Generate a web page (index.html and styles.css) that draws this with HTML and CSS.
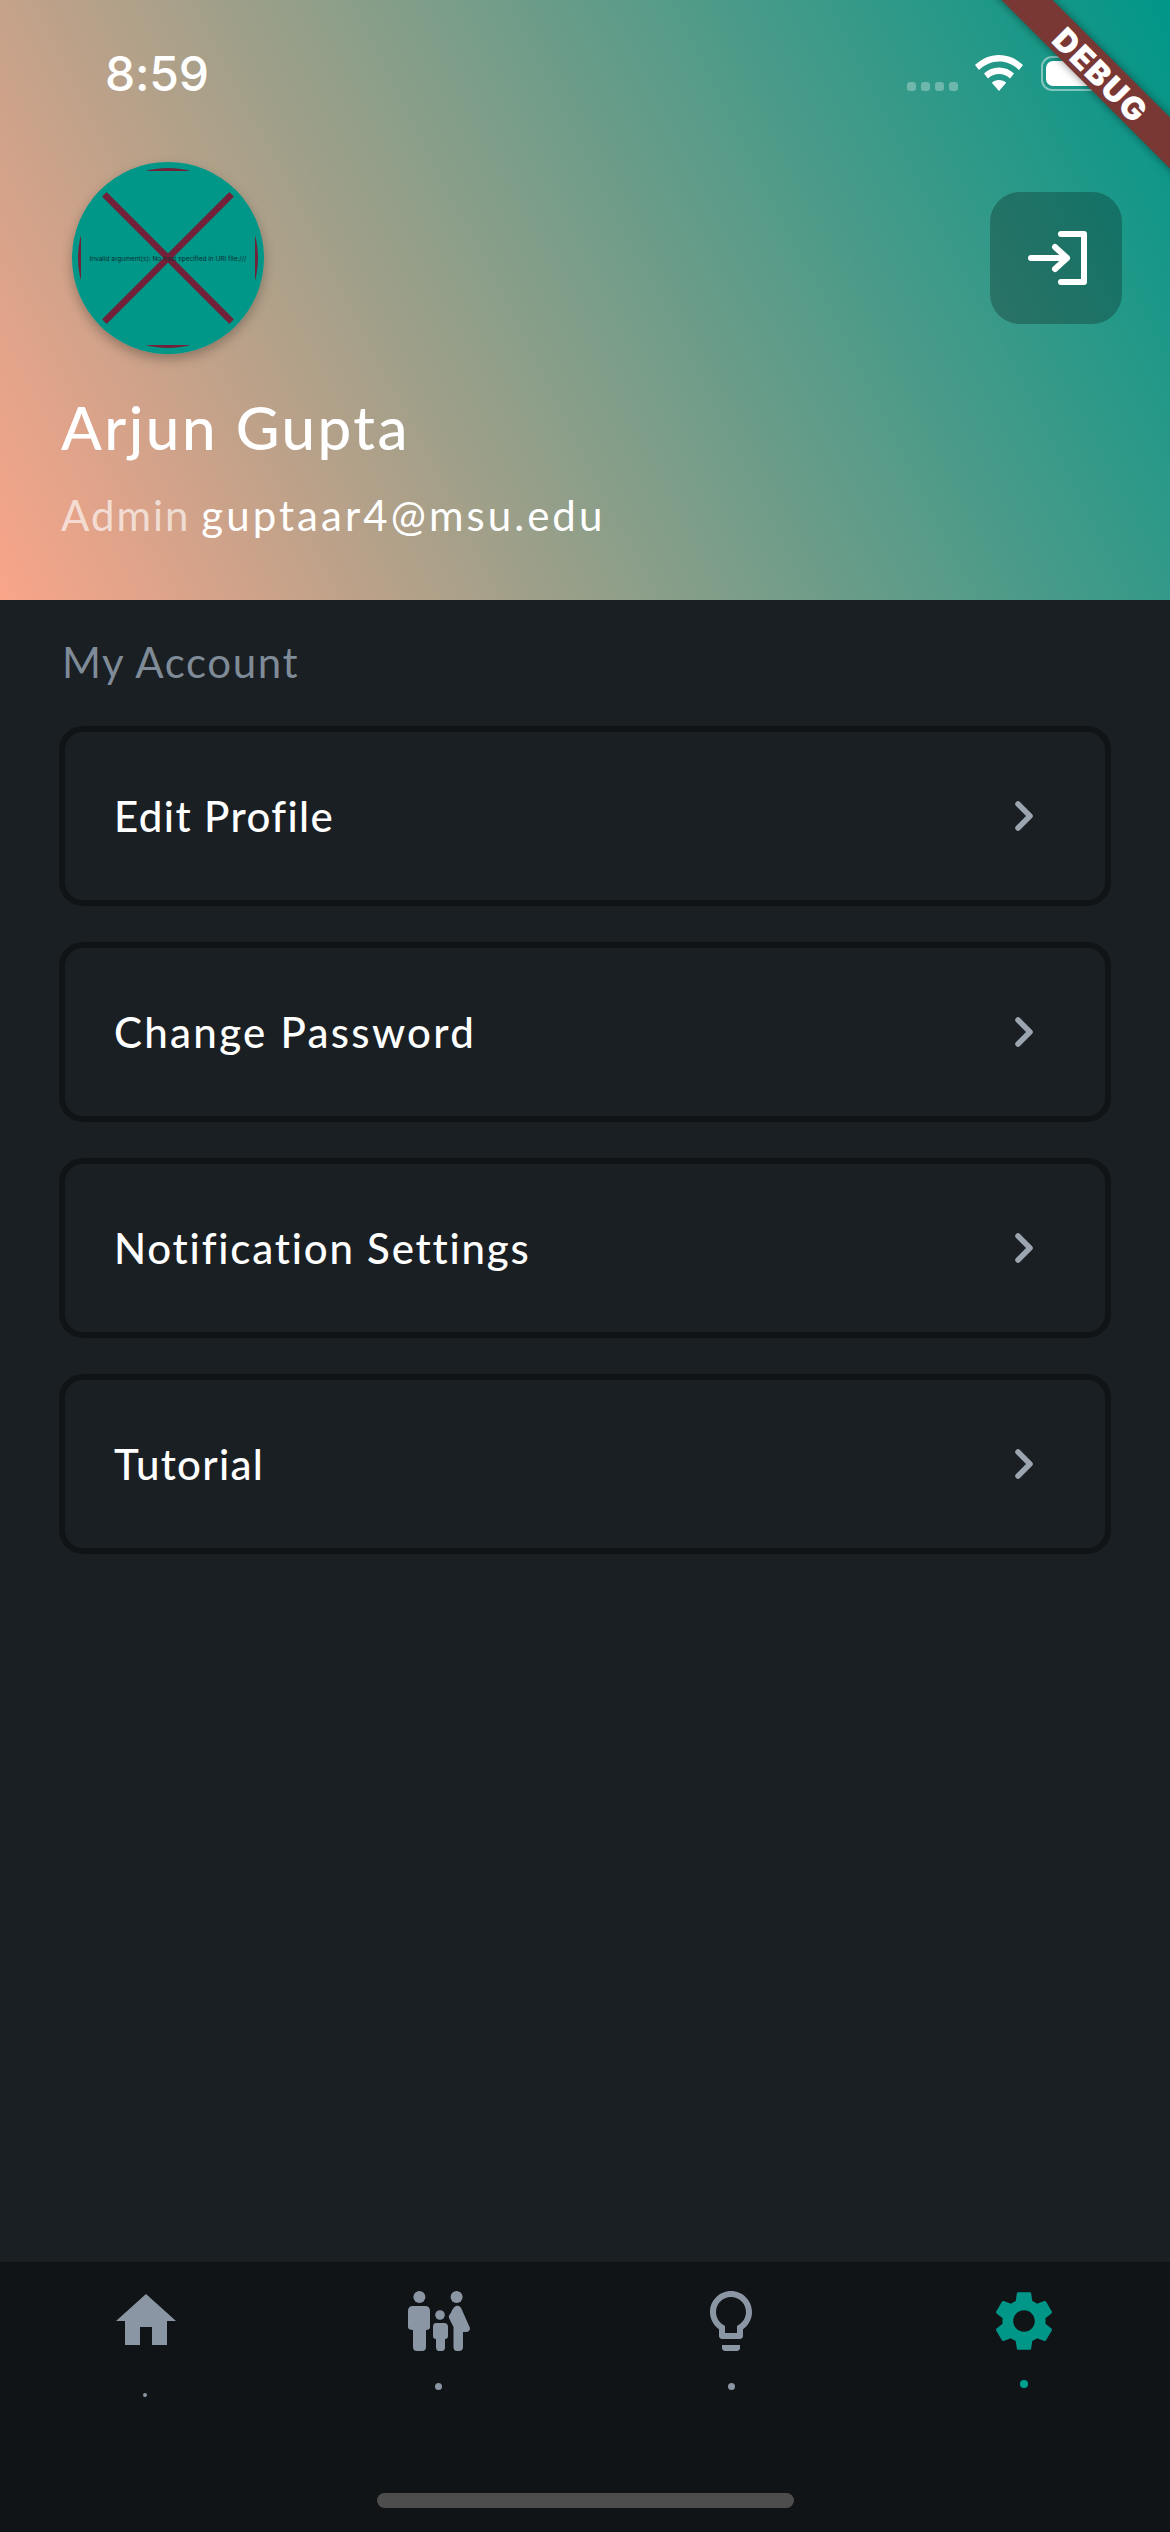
FILE: index.html
```html
<!DOCTYPE html>
<html lang="en">
<head>
<meta charset="utf-8">
<title>Account</title>
<link rel="stylesheet" href="styles.css">
</head>
<body>
<div class="screen">
  <header class="hero">
    <div class="status">
      <span class="time">8:59</span>
      <div class="status-right">
        <div class="signal"><i></i><i></i><i></i><i></i></div>
        <svg class="wifi" width="48" height="36" viewBox="0 0 48 36"><path d="M24 0C15 0 7 3.400 0 10l4 5C10 9.500 16.500 6.500 24 6.500S38 9.500 44 15l4-5C41 3.400 33 0 24 0z" fill="#fff"/><path d="M24 12.500c-5.800 0-11 2.200-15 6l4 5c2.900-2.800 6.700-4.500 11-4.500s8.100 1.700 11 4.500l4-5c-4-3.800-9.200-6-15-6z" fill="#fff"/><path d="M24 25c-2.800 0-5.300 1-7.200 2.800L24 36l7.200-8.200C29.300 26 26.800 25 24 25z" fill="#fff"/></svg>
        <div class="battery"><div class="battery-fill"></div></div>
      </div>
    </div>
    <div class="hero-row">
      <div class="avatar">
        <svg width="192" height="192" viewBox="0 0 192 192">
          <defs><clipPath id="avatarClip"><circle cx="96" cy="96" r="90"/></clipPath></defs>
          <circle cx="96" cy="96" r="96" fill="#009688"/>
          <g clip-path="url(#avatarClip)" stroke="#722138" fill="none">
            <rect x="7.500" y="7.500" width="177" height="177" stroke-width="3"/>
            <path d="M6 6L186 186M186 6L6 186" stroke-width="6.500"/>
          </g>
          <text class="avatar-error" x="96" y="98.500" text-anchor="middle">Invalid argument(s): No host specified in URI file:///</text>
        </svg>
      </div>
      <button class="logout" type="button" aria-label="Log out">
        <svg width="60" height="54" viewBox="0 0 60 54" fill="none" stroke="#fff" stroke-width="6" stroke-linecap="round" stroke-linejoin="round"><path d="M3 27H39M27 16L39 27L27 38"/><path d="M33 3H56V51H33"/></svg>
      </button>
    </div>
    <h1 class="name">Arjun Gupta</h1>
    <p class="meta"><span class="role">Admin</span> <span class="email">guptaar4@msu.edu</span></p>
  </header>

  <main class="content">
    <h2 class="section-title">My Account</h2>
    <div class="menu">
      <a class="card"><span class="card-label label-edit">Edit Profile</span><svg class="chev" width="18" height="30" viewBox="0 0 18 30"><path d="M3 3L15 15L3 27"/></svg></a>
      <a class="card"><span class="card-label label-password">Change Password</span><svg class="chev" width="18" height="30" viewBox="0 0 18 30"><path d="M3 3L15 15L3 27"/></svg></a>
      <a class="card"><span class="card-label label-notify">Notification Settings</span><svg class="chev" width="18" height="30" viewBox="0 0 18 30"><path d="M3 3L15 15L3 27"/></svg></a>
      <a class="card"><span class="card-label label-tutorial">Tutorial</span><svg class="chev" width="18" height="30" viewBox="0 0 18 30"><path d="M3 3L15 15L3 27"/></svg></a>
    </div>
  </main>

  <nav class="nav">
    <div class="nav-item">
      <svg class="nav-icon" width="60" height="60" viewBox="0 0 60 60"><path d="M30 3L60 30H51V54H36V36H24V54H9V30H0Z"/></svg>
      <i class="dot dot-sm"></i>
    </div>
    <div class="nav-item">
      <svg class="nav-icon" width="62" height="60" viewBox="0 0 62 60"><circle cx="11.400" cy="6" r="6"/><path d="M5 15H17Q22 15 22 20V36Q22 39 18 39V56Q18 60 14 60H9Q5 60 5 56V39Q0 39 0 36V20Q0 15 5 15Z"/><circle cx="32" cy="24" r="4.800"/><path d="M28 32H36Q40 32 40 36V45Q40 48 37 48V56Q37 60 34 60H31Q28 60 28 56V48Q25 48 25 45V36Q25 32 28 32Z"/><circle cx="48.600" cy="6" r="6"/><path d="M48 15C51 14 53 16 54 19L62 37Q62 41 58 41H55V56Q55 60 51 60H49Q45.500 60 45.500 56V36L41 27Q40 25 42 23C44 21 44 17 48 15Z"/></svg>
      <i class="dot dot-md"></i>
    </div>
    <div class="nav-item">
      <svg class="nav-icon" width="42" height="60" viewBox="5 2 14 20"><path d="M9 21c0 .55.45 1 1 1h4c.55 0 1-.45 1-1v-1H9v1zm3-19C8.140 2 5 5.140 5 9c0 2.380 1.190 4.470 3 5.740V17c0 .55.45 1 1 1h6c.55 0 1-.45 1-1v-2.260c1.810-1.270 3-3.360 3-5.740 0-3.860-3.140-7-7-7zm2.850 11.100l-.85.6V16h-4v-2.300l-.85-.6C7.800 12.160 7 10.630 7 9c0-2.760 2.240-5 5-5s5 2.240 5 5c0 1.630-.8 3.160-2.150 4.100z"/></svg>
      <i class="dot dot-md"></i>
    </div>
    <div class="nav-item nav-item-active">
      <svg class="nav-icon" width="56" height="60" viewBox="2.670 2 18.660 20"><path d="M19.140 12.940c.04-.3.06-.61.06-.94 0-.32-.02-.64-.07-.94l2.030-1.580c.18-.14.23-.41.12-.61l-1.920-3.320c-.12-.22-.37-.29-.59-.22l-2.390.96c-.5-.38-1.030-.7-1.620-.94l-.36-2.540c-.04-.24-.24-.41-.48-.41h-3.840c-.24 0-.43.17-.47.41l-.36 2.540c-.59.24-1.130.57-1.620.94l-2.390-.96c-.22-.08-.47 0-.59.22L2.740 8.870c-.12.21-.08.47.12.61l2.030 1.580c-.05.3-.09.63-.09.94s.02.64.07.94l-2.030 1.580c-.18.14-.23.41-.12.61l1.920 3.320c.12.22.37.29.59.22l2.390-.96c.5.38 1.030.7 1.620.94l.36 2.540c.05.24.24.41.48.41h3.840c.24 0 .44-.17.47-.41l.36-2.540c.59-.24 1.130-.56 1.620-.94l2.390.96c.22.08.47 0 .59-.22l1.920-3.320c.12-.22.07-.47-.12-.61l-2.010-1.580zM12 15.600c-1.980 0-3.600-1.620-3.600-3.600s1.620-3.600 3.600-3.600 3.600 1.620 3.600 3.600-1.620 3.600-3.600 3.600z"/></svg>
      <i class="dot dot-lg"></i>
    </div>
    <div class="home-indicator"></div>
  </nav>

  <div class="debug-banner"><span>DEBUG</span></div>
</div>
</body>
</html>
```
FILE: styles.css
```css
* { box-sizing: border-box; }
html, body { margin: 0; padding: 0; background: #1a1f24; }
body { font-family: "Lato", "Inter", sans-serif; color: #fff; overflow: hidden; }

.screen {
  position: relative;
  width: 1170px;
  height: 2532px;
  display: flex;
  flex-direction: column;
  overflow: hidden;
}

/* Header */
.hero {
  height: 600px;
  flex: none;
  background: linear-gradient(62.85deg, #f9a58a 0%, #009688 100%);
}
.status {
  height: 162px;
  padding: 46px 63px 0 105px;
  display: flex;
  align-items: flex-start;
  justify-content: space-between;
}
.time {
  font-family: "Inter", sans-serif;
  font-size: 48px;
  font-weight: 500;
  line-height: 56px;
  letter-spacing: -0.2px;
}
.status-right { display: flex; align-items: flex-start; padding-top: 9px; }
.signal { display: flex; gap: 5px; margin-top: 27px; margin-right: 17px; }
.signal i { width: 9px; height: 9px; border-radius: 3px; background: rgba(255,255,255,.3); }
.wifi { display: block; margin-right: 18px; margin-top: 0; }
.battery {
  width: 66px;
  height: 35px;
  margin-top: 1px;
  padding: 3px;
  border: 2.5px solid rgba(255,255,255,.45);
  border-radius: 11px;
}
.battery-fill { height: 100%; background: #fff; border-radius: 7px; }

.hero-row {
  height: 192px;
  padding: 0 48px 0 72px;
  display: flex;
  align-items: center;
  justify-content: space-between;
}
.avatar {
  width: 192px;
  height: 192px;
  border-radius: 50%;
  box-shadow: 0 5px 12px rgba(0,0,0,.28);
}
.avatar svg { display: block; }
.avatar-error { font-family: "Inter", sans-serif; font-size: 6.500px; fill: #0b2f33; }
.logout {
  width: 132px;
  height: 132px;
  padding: 0 0 0 4px;
  border: 0;
  border-radius: 30px;
  background: rgba(0,0,0,.25);
  display: flex;
  align-items: center;
  justify-content: center;
}
.logout svg { display: block; }

.name {
  margin: 37px 0 0 61px;
  font-size: 60px;
  font-weight: 500;
  line-height: 72px;
  letter-spacing: 2.500px;
}
.meta {
  margin: 27px 0 0 61px;
  font-size: 42px;
  line-height: 50px;
}
.role { color: rgba(255,255,255,.65); letter-spacing: 2px; }
.email { letter-spacing: 3.050px; }

/* Main */
.content { flex: 1; padding: 0 59px; background: #1a1f24; }
.section-title {
  margin: 37px 0 0 3px;
  height: 89px;
  font-size: 42px;
  font-weight: 400;
  line-height: 50px;
  letter-spacing: 1.600px;
  color: #7f8b97;
}
.menu { display: flex; flex-direction: column; gap: 36px; }
.card {
  height: 180px;
  padding: 0 72px 0 49px;
  border: 6px solid #101417;
  border-radius: 24px;
  display: flex;
  align-items: center;
  justify-content: space-between;
}
.card-label {
  font-size: 42px;
  font-weight: 500;
  line-height: 50px;
  color: #fff;
}
.label-edit { letter-spacing: 1.400px; }
.label-password { letter-spacing: 2.300px; }
.label-notify { letter-spacing: 1.800px; }
.label-tutorial { letter-spacing: 1.300px; }
.chev { display: block; fill: none; stroke: #9aa5b0; stroke-width: 5.500; stroke-linecap: round; stroke-linejoin: round; }

/* Bottom nav */
.nav {
  position: relative;
  height: 270px;
  flex: none;
  background: #101417;
  display: grid;
  grid-template-columns: repeat(4, 1fr);
  align-items: start;
}
.nav-item { padding-top: 29px; display: flex; flex-direction: column; align-items: center; }
.nav-icon { display: block; fill: #8a96a3; }
.nav-item-active .nav-icon { fill: #009688; }
.dot { display: block; border-radius: 50%; background: #8a96a3; }
.dot-sm { width: 4px; height: 4px; margin-top: 42px; margin-right: 2px; }
.dot-md { width: 7px; height: 7px; margin-top: 32px; }
.dot-lg { width: 8px; height: 8px; margin-top: 29px; background: #00a08f; }
.home-indicator {
  position: absolute;
  left: 377px;
  top: 231px;
  width: 417px;
  height: 15px;
  border-radius: 8px;
  background: #4d4d4d;
}

/* Debug ribbon */
.debug-banner {
  position: absolute;
  left: 898px;
  top: 53px;
  width: 400px;
  height: 36px;
  transform: rotate(45deg);
  background: #7a3835;
  box-shadow: 0 0 8px rgba(0,0,0,.45);
  display: flex;
  align-items: center;
  justify-content: center;
}
.debug-banner span {
  font-family: "Inter", sans-serif;
  font-size: 32px;
  font-weight: 900;
  line-height: 36px;
  color: #fff;
  letter-spacing: 1.500px;
  position: relative;
  top: 2px;
  left: 5px;
}
```
